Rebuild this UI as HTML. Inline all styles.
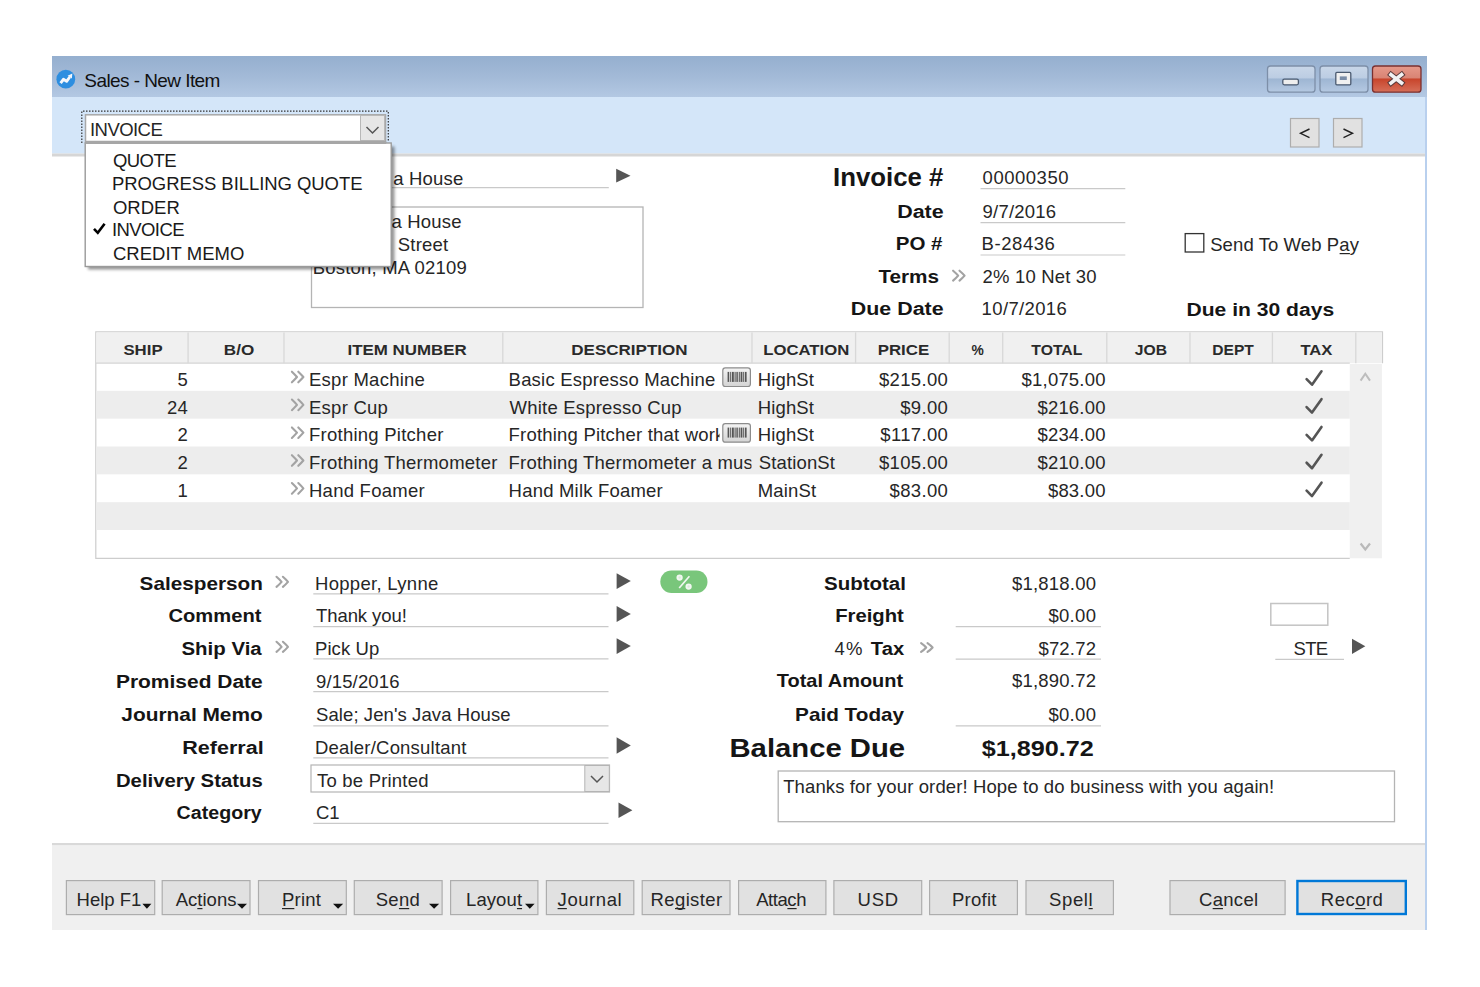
<!DOCTYPE html>
<html><head><meta charset="utf-8"><title>Sales - New Item</title>
<style>
html,body{margin:0;padding:0;background:#ffffff;width:1480px;height:987px;overflow:hidden;}
svg{display:block;font-family:"Liberation Sans", sans-serif;}
text{white-space:pre;}
</style></head><body>
<svg width="1480" height="987" viewBox="0 0 1480 987">
<defs>
<linearGradient id="gTitle" x1="0" y1="0" x2="0" y2="1"><stop offset="0" stop-color="#95afcf"/><stop offset="0.55" stop-color="#a4bbd8"/><stop offset="1" stop-color="#b3c8e3"/></linearGradient>
<linearGradient id="gBtn" x1="0" y1="0" x2="0" y2="1"><stop offset="0" stop-color="#c9d7e9"/><stop offset="0.45" stop-color="#bccde3"/><stop offset="0.5" stop-color="#9eb6d3"/><stop offset="1" stop-color="#b5c9e2"/></linearGradient>
<linearGradient id="gClose" x1="0" y1="0" x2="0" y2="1"><stop offset="0" stop-color="#e6998a"/><stop offset="0.45" stop-color="#d98474"/><stop offset="0.5" stop-color="#c8452c"/><stop offset="1" stop-color="#d6705a"/></linearGradient>
<linearGradient id="gBar" x1="0" y1="0" x2="0" y2="1"><stop offset="0" stop-color="#f4f4f4"/><stop offset="1" stop-color="#d4d4d4"/></linearGradient>
<clipPath id="clipIcon"><rect x="500" y="300" width="219.5" height="300"/></clipPath>
<clipPath id="clipDesc"><rect x="500" y="300" width="251.5" height="300"/></clipPath>
<filter id="blur" x="-10%" y="-10%" width="120%" height="120%"><feGaussianBlur stdDeviation="1.4"/></filter>
</defs>
<rect x="0" y="0" width="1480" height="987" fill="#ffffff"/>
<rect x="52" y="56" width="1375" height="41" fill="url(#gTitle)"/>
<rect x="52" y="97" width="1373" height="56.5" fill="#d4e6f9"/>
<rect x="52" y="153.5" width="1373" height="3" fill="#d6d6d6"/>
<rect x="1425" y="97" width="2" height="833" fill="#b9d0ee"/>
<rect x="52" y="843" width="1373" height="2.5" fill="#d9d9d9"/>
<rect x="52" y="845.5" width="1373" height="84.5" fill="#f0f0f0"/>
<circle cx="65.8" cy="79.2" r="9.4" fill="#2d8ee0"/>
<path d="M60.6 83.2 L63.4 79.3 L66.6 81.3 L69.8 77" fill="none" stroke="#f4f7fb" stroke-width="2.9" stroke-linejoin="round"/>
<path d="M67.6 75.8 L72.4 73.4 L71.8 78.6 Z" fill="#f4f7fb"/>
<rect x="1267.5" y="66" width="47.5" height="26.200000000000003" rx="3" fill="url(#gBtn)" stroke="#7d8fa8" stroke-width="1.3"/>
<rect x="1320" y="66" width="48" height="26.200000000000003" rx="3" fill="url(#gBtn)" stroke="#7d8fa8" stroke-width="1.3"/>
<rect x="1372.5" y="66" width="48.5" height="26.200000000000003" rx="3" fill="url(#gClose)" stroke="#7a3030" stroke-width="1.3"/>
<rect x="1282.8" y="79.2" width="15.6" height="5.6" rx="1.5" fill="#eeeeee" stroke="#4a5a70" stroke-width="1.3"/>
<rect x="1335.8" y="72.4" width="15" height="12.4" rx="1" fill="#f0f0f0" stroke="#4a5a70" stroke-width="1.3"/>
<rect x="1339.8" y="76.4" width="7" height="3.6" fill="#7a8da8"/>
<path d="M1391 74.6 L1401.6 83 M1401.6 74.6 L1391 83" stroke="#5a3a3a" stroke-width="5.6" stroke-linecap="square"/>
<path d="M1391 74.6 L1401.6 83 M1401.6 74.6 L1391 83" stroke="#f2f2f2" stroke-width="3.6" stroke-linecap="square"/>
<rect x="1290.5" y="118.5" width="28.5" height="28.5" fill="#e1e1e1" stroke="#adadad" stroke-width="1.2"/>
<rect x="1333.5" y="118.5" width="28.5" height="28.5" fill="#e1e1e1" stroke="#adadad" stroke-width="1.2"/>
<path d="M1309.5 129 L1300.5 133.3 L1309.5 137.6" fill="none" stroke="#222" stroke-width="1.4"/>
<path d="M1343.5 129 L1352.5 133.3 L1343.5 137.6" fill="none" stroke="#222" stroke-width="1.4"/>
<rect x="85.5" y="114.8" width="300" height="28" fill="#ffffff" stroke="#a8a8a8" stroke-width="1.5"/>
<rect x="360.5" y="115.5" width="24" height="25" fill="#e6e6e6" stroke="#b8b8b8" stroke-width="1"/>
<path d="M366.5 127 L372.5 133 L378.5 127" fill="none" stroke="#555" stroke-width="1.5"/>
<path d="M81.8 143 L81.8 111.2 L388.3 111.2 L388.3 141.5" fill="none" stroke="#333" stroke-width="1.2" stroke-dasharray="1.5 1.5"/>
<line x1="313" y1="187.7" x2="608.8" y2="187.7" stroke="#c9c9c9" stroke-width="1.2"/>
<rect x="311.5" y="207" width="331.5" height="100.5" fill="none" stroke="#b4b4b4" stroke-width="1.3"/>
<path d="M616.2 168.8 L630.5 175.65 L616.2 182.5 Z" fill="#555555"/>
<path d="M953.10 270.70 Q956.30 273.45 958.20 275.65 Q956.30 277.85 953.10 280.60 M959.50 270.70 Q962.70 273.45 964.60 275.65 Q962.70 277.85 959.50 280.60" fill="none" stroke="#a3a3a3" stroke-width="2.1" stroke-linecap="round" stroke-linejoin="round"/>
<line x1="980.5" y1="188.6" x2="1125.3" y2="188.6" stroke="#c9c9c9" stroke-width="1.2"/>
<line x1="980.5" y1="222.6" x2="1125.3" y2="222.6" stroke="#c9c9c9" stroke-width="1.2"/>
<line x1="980.5" y1="255" x2="1125.3" y2="255" stroke="#c9c9c9" stroke-width="1.2"/>
<rect x="1185.2" y="233.6" width="18.6" height="18.4" fill="#fff" stroke="#333" stroke-width="1.3"/>
<path d="M1382.5 363.2 L1382.5 331.8 L95.8 331.8 L95.8 558.3 L1349.8 558.3" fill="none" stroke="#cdcdcd" stroke-width="1.2"/>
<rect x="96.4" y="332.4" width="1285.5" height="30.6" fill="#f0f0f0"/>
<line x1="96" y1="363.2" x2="1349.8" y2="363.2" stroke="#d4d4d4" stroke-width="1.2"/>
<line x1="188.1" y1="332.4" x2="188.1" y2="363.2" stroke="#d8d8d8" stroke-width="1.3"/>
<line x1="284" y1="332.4" x2="284" y2="363.2" stroke="#d8d8d8" stroke-width="1.3"/>
<line x1="502.8" y1="332.4" x2="502.8" y2="363.2" stroke="#d8d8d8" stroke-width="1.3"/>
<line x1="752" y1="332.4" x2="752" y2="363.2" stroke="#d8d8d8" stroke-width="1.3"/>
<line x1="855.6" y1="332.4" x2="855.6" y2="363.2" stroke="#d8d8d8" stroke-width="1.3"/>
<line x1="949.2" y1="332.4" x2="949.2" y2="363.2" stroke="#d8d8d8" stroke-width="1.3"/>
<line x1="1002.7" y1="332.4" x2="1002.7" y2="363.2" stroke="#d8d8d8" stroke-width="1.3"/>
<line x1="1106.8" y1="332.4" x2="1106.8" y2="363.2" stroke="#d8d8d8" stroke-width="1.3"/>
<line x1="1190" y1="332.4" x2="1190" y2="363.2" stroke="#d8d8d8" stroke-width="1.3"/>
<line x1="1272.4" y1="332.4" x2="1272.4" y2="363.2" stroke="#d8d8d8" stroke-width="1.3"/>
<line x1="1355.8" y1="332.4" x2="1355.8" y2="363.2" stroke="#d8d8d8" stroke-width="1.3"/>
<rect x="96.4" y="390.84" width="1253.3999999999999" height="27.84" fill="#ededed"/>
<rect x="96.4" y="446.52" width="1253.3999999999999" height="27.84" fill="#ededed"/>
<rect x="96.4" y="502.2" width="1253.3999999999999" height="27.84" fill="#ededed"/>
<rect x="1349.8" y="363.8" width="32.100000000000136" height="194.49999999999994" fill="#f0f0f0"/>
<path d="M1360.6 380.6 L1365.3 373.8 L1370 380.6" fill="none" stroke="#bdbdbd" stroke-width="2"/>
<path d="M1360.6 543.5 L1365.3 549.5 L1370 543.5" fill="none" stroke="#b9b9b9" stroke-width="2.2"/>
<path d="M291.90 371.70 Q295.10 374.80 297.00 377.00 Q295.10 379.20 291.90 382.30 M298.30 371.70 Q301.50 374.80 303.40 377.00 Q301.50 379.20 298.30 382.30" fill="none" stroke="#a3a3a3" stroke-width="2.1" stroke-linecap="round" stroke-linejoin="round"/>
<rect x="722.8" y="367.9" width="27.6" height="18.6" rx="2.5" fill="url(#gBar)" stroke="#8c8c8c" stroke-width="1.2"/>
<rect x="727.6" y="371.9" width="1.6" height="10" fill="#555"/>
<rect x="730.2" y="371.9" width="1.0" height="10" fill="#555"/>
<rect x="732.0" y="371.9" width="1.8" height="10" fill="#555"/>
<rect x="734.6" y="371.9" width="1.0" height="10" fill="#555"/>
<rect x="736.4" y="371.9" width="1.4" height="10" fill="#555"/>
<rect x="738.8" y="371.9" width="1.0" height="10" fill="#555"/>
<rect x="740.6" y="371.9" width="1.8" height="10" fill="#555"/>
<rect x="743.2" y="371.9" width="1.0" height="10" fill="#555"/>
<rect x="745.0" y="371.9" width="1.6" height="10" fill="#555"/>
<path d="M1306.6 379.2 L1312 384.7 L1321.5 371.3" fill="none" stroke="#555555" stroke-width="2.6" stroke-linecap="round" stroke-linejoin="round"/>
<path d="M291.90 399.54 Q295.10 402.64 297.00 404.84 Q295.10 407.04 291.90 410.14 M298.30 399.54 Q301.50 402.64 303.40 404.84 Q301.50 407.04 298.30 410.14" fill="none" stroke="#a3a3a3" stroke-width="2.1" stroke-linecap="round" stroke-linejoin="round"/>
<path d="M1306.6 407.03999999999996 L1312 412.53999999999996 L1321.5 399.14" fill="none" stroke="#555555" stroke-width="2.6" stroke-linecap="round" stroke-linejoin="round"/>
<path d="M291.90 427.38 Q295.10 430.48 297.00 432.68 Q295.10 434.88 291.90 437.98 M298.30 427.38 Q301.50 430.48 303.40 432.68 Q301.50 434.88 298.30 437.98" fill="none" stroke="#a3a3a3" stroke-width="2.1" stroke-linecap="round" stroke-linejoin="round"/>
<rect x="722.8" y="423.58" width="27.6" height="18.6" rx="2.5" fill="url(#gBar)" stroke="#8c8c8c" stroke-width="1.2"/>
<rect x="727.6" y="427.58" width="1.6" height="10" fill="#555"/>
<rect x="730.2" y="427.58" width="1.0" height="10" fill="#555"/>
<rect x="732.0" y="427.58" width="1.8" height="10" fill="#555"/>
<rect x="734.6" y="427.58" width="1.0" height="10" fill="#555"/>
<rect x="736.4" y="427.58" width="1.4" height="10" fill="#555"/>
<rect x="738.8" y="427.58" width="1.0" height="10" fill="#555"/>
<rect x="740.6" y="427.58" width="1.8" height="10" fill="#555"/>
<rect x="743.2" y="427.58" width="1.0" height="10" fill="#555"/>
<rect x="745.0" y="427.58" width="1.6" height="10" fill="#555"/>
<path d="M1306.6 434.88 L1312 440.38 L1321.5 426.98" fill="none" stroke="#555555" stroke-width="2.6" stroke-linecap="round" stroke-linejoin="round"/>
<path d="M291.90 455.22 Q295.10 458.32 297.00 460.52 Q295.10 462.72 291.90 465.82 M298.30 455.22 Q301.50 458.32 303.40 460.52 Q301.50 462.72 298.30 465.82" fill="none" stroke="#a3a3a3" stroke-width="2.1" stroke-linecap="round" stroke-linejoin="round"/>
<path d="M1306.6 462.71999999999997 L1312 468.21999999999997 L1321.5 454.82" fill="none" stroke="#555555" stroke-width="2.6" stroke-linecap="round" stroke-linejoin="round"/>
<path d="M291.90 483.06 Q295.10 486.16 297.00 488.36 Q295.10 490.56 291.90 493.66 M298.30 483.06 Q301.50 486.16 303.40 488.36 Q301.50 490.56 298.30 493.66" fill="none" stroke="#a3a3a3" stroke-width="2.1" stroke-linecap="round" stroke-linejoin="round"/>
<path d="M1306.6 490.56 L1312 496.06 L1321.5 482.66" fill="none" stroke="#555555" stroke-width="2.6" stroke-linecap="round" stroke-linejoin="round"/>
<path d="M276.50 576.80 Q279.70 579.65 281.60 581.85 Q279.70 584.05 276.50 586.90 M282.90 576.80 Q286.10 579.65 288.00 581.85 Q286.10 584.05 282.90 586.90" fill="none" stroke="#a3a3a3" stroke-width="2.1" stroke-linecap="round" stroke-linejoin="round"/>
<path d="M276.50 641.80 Q279.70 644.65 281.60 646.85 Q279.70 649.05 276.50 651.90 M282.90 641.80 Q286.10 644.65 288.00 646.85 Q286.10 649.05 282.90 651.90" fill="none" stroke="#a3a3a3" stroke-width="2.1" stroke-linecap="round" stroke-linejoin="round"/>
<line x1="313.3" y1="593.8" x2="608.5" y2="593.8" stroke="#c9c9c9" stroke-width="1.2"/>
<line x1="313.3" y1="626.6" x2="608.5" y2="626.6" stroke="#c9c9c9" stroke-width="1.2"/>
<line x1="313.3" y1="658.9" x2="608.5" y2="658.9" stroke="#c9c9c9" stroke-width="1.2"/>
<line x1="313.3" y1="691.7" x2="608.5" y2="691.7" stroke="#c9c9c9" stroke-width="1.2"/>
<line x1="313.3" y1="725.9" x2="608.5" y2="725.9" stroke="#c9c9c9" stroke-width="1.2"/>
<line x1="313.3" y1="757.9" x2="608.5" y2="757.9" stroke="#c9c9c9" stroke-width="1.2"/>
<line x1="313.3" y1="823.4" x2="608.5" y2="823.4" stroke="#c9c9c9" stroke-width="1.2"/>
<rect x="311" y="765" width="298.5" height="27" fill="#fff" stroke="#b4b4b4" stroke-width="1.2"/>
<rect x="584.8" y="765.5" width="24.5" height="26" fill="#e6e6e6" stroke="#b4b4b4" stroke-width="1"/>
<path d="M591 776 L597 782 L603 776" fill="none" stroke="#555" stroke-width="1.5"/>
<path d="M616.6 573.2 L630.8 581.1 L616.6 589 Z" fill="#555555"/>
<path d="M616.6 606 L630.8 614.0 L616.6 622 Z" fill="#555555"/>
<path d="M616.6 638.3 L630.8 646.0999999999999 L616.6 653.9 Z" fill="#555555"/>
<path d="M616.6 737.3 L630.8 745.5 L616.6 753.7 Z" fill="#555555"/>
<path d="M618.5 802.4 L632.4 810.2 L618.5 818 Z" fill="#555555"/>
<rect x="660.3" y="570.6" width="47.2" height="22.3" rx="11.15" fill="#79c67b"/>
<circle cx="679.6" cy="577.6" r="2.2" fill="#d8eed8" stroke="#f2f7f2" stroke-width="1.9"/>
<circle cx="688.6" cy="586.6" r="2.2" fill="#d8eed8" stroke="#f2f7f2" stroke-width="1.9"/>
<line x1="679.2" y1="588" x2="689.4" y2="576.2" stroke="#f2f7f2" stroke-width="1.7"/>
<path d="M921.10 643.10 Q924.30 645.30 926.20 647.50 Q924.30 649.70 921.10 651.90 M927.50 643.10 Q930.70 645.30 932.60 647.50 Q930.70 649.70 927.50 651.90" fill="none" stroke="#a3a3a3" stroke-width="2.1" stroke-linecap="round" stroke-linejoin="round"/>
<line x1="955.7" y1="626.7" x2="1101" y2="626.7" stroke="#c9c9c9" stroke-width="1.2"/>
<line x1="955.7" y1="659.1" x2="1101" y2="659.1" stroke="#c9c9c9" stroke-width="1.2"/>
<line x1="955.7" y1="725.9" x2="1101" y2="725.9" stroke="#c9c9c9" stroke-width="1.2"/>
<rect x="1270.8" y="603.5" width="57" height="21.7" fill="#fff" stroke="#c4c4c4" stroke-width="1.5"/>
<line x1="1275.3" y1="659.4" x2="1344" y2="659.4" stroke="#c9c9c9" stroke-width="1.2"/>
<path d="M1352 638.7 L1365.3 646.3 L1352 653.9 Z" fill="#555555"/>
<rect x="778.2" y="771" width="616.3" height="50.7" fill="#fff" stroke="#b4b4b4" stroke-width="1.3"/>
<rect x="66.39999999999999" y="880.6" width="88.30000000000001" height="34" fill="#e1e1e1" stroke="#adadad" stroke-width="1.2"/>
<path d="M142.4 903.8 L151.4 903.8 L146.9 908.8 Z" fill="#111"/>
<rect x="162.2" y="880.6" width="87.8" height="34" fill="#e1e1e1" stroke="#adadad" stroke-width="1.2"/>
<path d="M237 903.8 L247 903.8 L242.0 908.8 Z" fill="#111"/>
<rect x="258.5" y="880.6" width="87.8" height="34" fill="#e1e1e1" stroke="#adadad" stroke-width="1.2"/>
<path d="M333 903.8 L343.2 903.8 L338.1 908.8 Z" fill="#111"/>
<rect x="354.3" y="880.6" width="87.8" height="34" fill="#e1e1e1" stroke="#adadad" stroke-width="1.2"/>
<path d="M429 903.8 L439.2 903.8 L434.1 908.8 Z" fill="#111"/>
<rect x="450.6" y="880.6" width="87.3" height="34" fill="#e1e1e1" stroke="#adadad" stroke-width="1.2"/>
<path d="M525 903.8 L534.6 903.8 L529.8 908.8 Z" fill="#111"/>
<rect x="546.4" y="880.6" width="87.40000000000002" height="34" fill="#e1e1e1" stroke="#adadad" stroke-width="1.2"/>
<rect x="642.2" y="880.6" width="87.8" height="34" fill="#e1e1e1" stroke="#adadad" stroke-width="1.2"/>
<rect x="738.6" y="880.6" width="87.3" height="34" fill="#e1e1e1" stroke="#adadad" stroke-width="1.2"/>
<rect x="833.9" y="880.6" width="87.8" height="34" fill="#e1e1e1" stroke="#adadad" stroke-width="1.2"/>
<rect x="929.6" y="880.6" width="87.8" height="34" fill="#e1e1e1" stroke="#adadad" stroke-width="1.2"/>
<rect x="1026.0" y="880.6" width="87.3999999999999" height="34" fill="#e1e1e1" stroke="#adadad" stroke-width="1.2"/>
<rect x="1170.0" y="880.6" width="115.09999999999995" height="34" fill="#e1e1e1" stroke="#adadad" stroke-width="1.2"/>
<rect x="1297.4" y="881" width="108.39999999999986" height="33" fill="#e1e1e1" stroke="#0078d7" stroke-width="2.4"/>
<text x="84.30" y="87.2" font-size="19" font-weight="400" letter-spacing="-0.568" fill="#111">Sales - New Item</text>
<text x="90.00" y="136.2" font-size="18.5" font-weight="400" letter-spacing="-0.555" fill="#262626">INVOICE</text>
<text x="393.18" y="185" font-size="18.5" font-weight="400" letter-spacing="0.200" fill="#262626">a House</text>
<text x="391.48" y="227.5" font-size="18.5" font-weight="400" letter-spacing="0.200" fill="#262626">a House</text>
<text x="314.74" y="250.5" font-size="18.5" font-weight="400" letter-spacing="0.200" fill="#262626">102 Main Street</text>
<text x="312.75" y="273.75" font-size="18.5" font-weight="400" letter-spacing="0.189" fill="#262626">Boston, MA 02109</text>
<text transform="translate(832.99 186.4) scale(1.0116 1)" x="0" y="0" font-size="25.5" font-weight="700" fill="#151515">Invoice #</text>
<text transform="translate(897.17 218.4) scale(1.1284 1)" x="0" y="0" font-size="19" font-weight="700" fill="#151515">Date</text>
<text transform="translate(895.72 250.1) scale(1.0812 1)" x="0" y="0" font-size="19" font-weight="700" fill="#151515">PO #</text>
<text transform="translate(878.40 283.2) scale(1.0917 1)" x="0" y="0" font-size="19" font-weight="700" fill="#151515">Terms</text>
<text transform="translate(850.87 315.4) scale(1.1264 1)" x="0" y="0" font-size="19" font-weight="700" fill="#151515">Due Date</text>
<text x="982.60" y="183.8" font-size="18.5" font-weight="400" letter-spacing="0.511" fill="#262626">00000350</text>
<text x="982.60" y="217.7" font-size="18.5" font-weight="400" letter-spacing="0.197" fill="#262626">9/7/2016</text>
<text x="981.60" y="250" font-size="18.5" font-weight="400" letter-spacing="0.557" fill="#262626">B-28436</text>
<text x="982.60" y="282.6" font-size="18.5" font-weight="400" letter-spacing="0.172" fill="#262626">2% 10 Net 30</text>
<text x="981.60" y="315" font-size="18.5" font-weight="400" letter-spacing="0.361" fill="#262626">10/7/2016</text>
<text x="1210.20" y="251" font-size="18.5" font-weight="400" letter-spacing="0.093" fill="#262626">Send To Web Pay</text><line x1="1339.62" y1="253.6" x2="1349.91" y2="253.6" stroke="#262626" stroke-width="1.2"/>
<text transform="translate(1186.49 315.6) scale(1.1104 1)" x="0" y="0" font-size="19" font-weight="700" fill="#151515">Due in 30 days</text>
<text transform="translate(123.40 355.1) scale(1.1589 1)" x="0" y="0" font-size="14.5" font-weight="700" fill="#2a2a2a">SHIP</text>
<text transform="translate(223.80 355.1) scale(1.1804 1)" x="0" y="0" font-size="14.5" font-weight="700" fill="#2a2a2a">B/O</text>
<text transform="translate(347.50 355.1) scale(1.1670 1)" x="0" y="0" font-size="14.5" font-weight="700" fill="#2a2a2a">ITEM NUMBER</text>
<text transform="translate(571.30 355.1) scale(1.1742 1)" x="0" y="0" font-size="14.5" font-weight="700" fill="#2a2a2a">DESCRIPTION</text>
<text transform="translate(763.30 355.1) scale(1.1528 1)" x="0" y="0" font-size="14.5" font-weight="700" fill="#2a2a2a">LOCATION</text>
<text transform="translate(877.70 355.1) scale(1.1626 1)" x="0" y="0" font-size="14.5" font-weight="700" fill="#2a2a2a">PRICE</text>
<text transform="translate(971.60 355.1) scale(0.9538 1)" x="0" y="0" font-size="14.5" font-weight="700" fill="#2a2a2a">%</text>
<text transform="translate(1031.30 355.1) scale(1.0886 1)" x="0" y="0" font-size="14.5" font-weight="700" fill="#2a2a2a">TOTAL</text>
<text transform="translate(1134.80 355.1) scale(1.0803 1)" x="0" y="0" font-size="14.5" font-weight="700" fill="#2a2a2a">JOB</text>
<text transform="translate(1212.30 355.1) scale(1.0743 1)" x="0" y="0" font-size="14.5" font-weight="700" fill="#2a2a2a">DEPT</text>
<text transform="translate(1300.40 355.1) scale(1.1433 1)" x="0" y="0" font-size="14.5" font-weight="700" fill="#2a2a2a">TAX</text>
<text x="177.40" y="385.8" font-size="18.5" font-weight="400" letter-spacing="0.200" fill="#262626">5</text>
<text x="309.00" y="385.8" font-size="18.5" font-weight="400" letter-spacing="0.250" fill="#262626">Espr Machine</text>
<text x="508.60" y="385.8" font-size="18.5" font-weight="400" letter-spacing="0.200" fill="#262626" clip-path="url(#clipIcon)">Basic Espresso Machine</text>
<text x="757.70" y="385.8" font-size="18.5" font-weight="400" letter-spacing="0.150" fill="#262626">HighSt</text>
<text x="878.92" y="385.8" font-size="18.5" font-weight="400" letter-spacing="0.350" fill="#262626">$215.00</text>
<text x="1021.59" y="385.8" font-size="18.5" font-weight="400" letter-spacing="0.200" fill="#262626">$1,075.00</text>
<text x="166.91" y="413.55" font-size="18.5" font-weight="400" letter-spacing="0.200" fill="#262626">24</text>
<text x="309.00" y="413.55" font-size="18.5" font-weight="400" letter-spacing="0.250" fill="#262626">Espr Cup</text>
<text x="509.60" y="413.55" font-size="18.5" font-weight="400" letter-spacing="0.200" fill="#262626" clip-path="url(#clipDesc)">White Espresso Cup</text>
<text x="757.70" y="413.55" font-size="18.5" font-weight="400" letter-spacing="0.150" fill="#262626">HighSt</text>
<text x="900.19" y="413.55" font-size="18.5" font-weight="400" letter-spacing="0.350" fill="#262626">$9.00</text>
<text x="1037.42" y="413.55" font-size="18.5" font-weight="400" letter-spacing="0.200" fill="#262626">$216.00</text>
<text x="177.40" y="441.3" font-size="18.5" font-weight="400" letter-spacing="0.200" fill="#262626">2</text>
<text x="309.00" y="441.3" font-size="18.5" font-weight="400" letter-spacing="0.250" fill="#262626">Frothing Pitcher</text>
<text x="508.60" y="441.3" font-size="18.5" font-weight="400" letter-spacing="0.200" fill="#262626" clip-path="url(#clipIcon)">Frothing Pitcher that works well</text>
<text x="757.70" y="441.3" font-size="18.5" font-weight="400" letter-spacing="0.150" fill="#262626">HighSt</text>
<text x="880.29" y="441.3" font-size="18.5" font-weight="400" letter-spacing="0.350" fill="#262626">$117.00</text>
<text x="1037.42" y="441.3" font-size="18.5" font-weight="400" letter-spacing="0.200" fill="#262626">$234.00</text>
<text x="177.40" y="469.05" font-size="18.5" font-weight="400" letter-spacing="0.200" fill="#262626">2</text>
<text x="309.00" y="469.05" font-size="18.5" font-weight="400" letter-spacing="0.250" fill="#262626">Frothing Thermometer</text>
<text x="508.60" y="469.05" font-size="18.5" font-weight="400" letter-spacing="0.200" fill="#262626" clip-path="url(#clipDesc)">Frothing Thermometer a must have</text>
<text x="758.70" y="469.05" font-size="18.5" font-weight="400" letter-spacing="0.150" fill="#262626">StationSt</text>
<text x="878.92" y="469.05" font-size="18.5" font-weight="400" letter-spacing="0.350" fill="#262626">$105.00</text>
<text x="1037.42" y="469.05" font-size="18.5" font-weight="400" letter-spacing="0.200" fill="#262626">$210.00</text>
<text x="177.40" y="496.8" font-size="18.5" font-weight="400" letter-spacing="0.200" fill="#262626">1</text>
<text x="309.00" y="496.8" font-size="18.5" font-weight="400" letter-spacing="0.250" fill="#262626">Hand Foamer</text>
<text x="508.60" y="496.8" font-size="18.5" font-weight="400" letter-spacing="0.200" fill="#262626" clip-path="url(#clipDesc)">Hand Milk Foamer</text>
<text x="757.70" y="496.8" font-size="18.5" font-weight="400" letter-spacing="0.150" fill="#262626">MainSt</text>
<text x="889.55" y="496.8" font-size="18.5" font-weight="400" letter-spacing="0.350" fill="#262626">$83.00</text>
<text x="1047.90" y="496.8" font-size="18.5" font-weight="400" letter-spacing="0.200" fill="#262626">$83.00</text>
<text transform="translate(139.60 590.2) scale(1.0908 1)" x="0" y="0" font-size="19" font-weight="700" fill="#151515">Salesperson</text>
<text transform="translate(168.40 622.4) scale(1.0624 1)" x="0" y="0" font-size="19" font-weight="700" fill="#151515">Comment</text>
<text transform="translate(181.50 655.2) scale(1.0753 1)" x="0" y="0" font-size="19" font-weight="700" fill="#151515">Ship Via</text>
<text transform="translate(115.90 687.5) scale(1.1044 1)" x="0" y="0" font-size="19" font-weight="700" fill="#151515">Promised Date</text>
<text transform="translate(121.30 721.4) scale(1.0991 1)" x="0" y="0" font-size="19" font-weight="700" fill="#151515">Journal Memo</text>
<text transform="translate(182.27 753.7) scale(1.1332 1)" x="0" y="0" font-size="19" font-weight="700" fill="#151515">Referral</text>
<text transform="translate(115.93 786.5) scale(1.0699 1)" x="0" y="0" font-size="19" font-weight="700" fill="#151515">Delivery Status</text>
<text transform="translate(176.60 818.8) scale(1.0340 1)" x="0" y="0" font-size="19" font-weight="700" fill="#151515">Category</text>
<text x="315.00" y="590.3" font-size="18.5" font-weight="400" letter-spacing="0.303" fill="#262626">Hopper, Lynne</text>
<text x="316.00" y="622.4" font-size="18.5" font-weight="400" letter-spacing="-0.076" fill="#262626">Thank you!</text>
<text x="315.00" y="655.2" font-size="18.5" font-weight="400" letter-spacing="0.075" fill="#262626">Pick Up</text>
<text x="316.00" y="687.5" font-size="18.5" font-weight="400" letter-spacing="0.148" fill="#262626">9/15/2016</text>
<text x="316.00" y="721.4" font-size="18.5" font-weight="400" letter-spacing="0.088" fill="#262626">Sale; Jen&#x27;s Java House</text>
<text x="315.00" y="753.7" font-size="18.5" font-weight="400" letter-spacing="0.204" fill="#262626">Dealer/Consultant</text>
<text x="317.00" y="786.5" font-size="18.5" font-weight="400" letter-spacing="0.206" fill="#262626">To be Printed</text>
<text x="316.00" y="818.8" font-size="18.5" font-weight="400" letter-spacing="0.000" fill="#262626">C1</text>
<text transform="translate(824.00 590.1) scale(1.0788 1)" x="0" y="0" font-size="19" font-weight="700" fill="#151515">Subtotal</text>
<text transform="translate(835.13 622.3) scale(1.0678 1)" x="0" y="0" font-size="19" font-weight="700" fill="#151515">Freight</text>
<text transform="translate(776.80 687.4) scale(1.0502 1)" x="0" y="0" font-size="19" font-weight="700" fill="#151515">Total Amount</text>
<text transform="translate(795.11 721) scale(1.0908 1)" x="0" y="0" font-size="19" font-weight="700" fill="#151515">Paid Today</text>
<text x="834.60" y="654.7" font-size="18.5" font-weight="400" letter-spacing="1.011" fill="#262626">4%</text>
<text transform="translate(870.80 654.7) scale(1.0641 1)" x="0" y="0" font-size="19" font-weight="700" fill="#151515">Tax</text>
<text transform="translate(729.47 756.8) scale(1.1261 1)" x="0" y="0" font-size="26" font-weight="700" fill="#151515">Balance Due</text>
<text x="1011.90" y="590.1" font-size="18.5" font-weight="400" letter-spacing="0.223" fill="#262626">$1,818.00</text>
<text x="1048.40" y="622.3" font-size="18.5" font-weight="400" letter-spacing="0.323" fill="#262626">$0.00</text>
<text x="1038.40" y="654.7" font-size="18.5" font-weight="400" letter-spacing="0.201" fill="#262626">$72.72</text>
<text x="1011.90" y="687.4" font-size="18.5" font-weight="400" letter-spacing="0.223" fill="#262626">$1,890.72</text>
<text x="1048.40" y="721" font-size="18.5" font-weight="400" letter-spacing="0.323" fill="#262626">$0.00</text>
<text transform="translate(981.70 755.7) scale(1.1217 1)" x="0" y="0" font-size="22.5" font-weight="700" fill="#151515">$1,890.72</text>
<text x="1293.50" y="655.4" font-size="18.5" font-weight="400" letter-spacing="-0.670" fill="#262626">STE</text>
<text x="783.20" y="792.9" font-size="18.5" font-weight="400" letter-spacing="0.116" fill="#262626">Thanks for your order! Hope to do business with you again!</text>
<text x="76.60" y="906" font-size="18.5" font-weight="400" letter-spacing="-0.015" fill="#262626">Help F1</text>
<text x="175.70" y="906" font-size="18.5" font-weight="400" letter-spacing="0.014" fill="#262626">Actions</text><line x1="197.32" y1="908.6" x2="202.46" y2="908.6" stroke="#262626" stroke-width="1.2"/>
<text x="282.00" y="906" font-size="18.5" font-weight="400" letter-spacing="0.225" fill="#262626">Print</text><line x1="282.00" y1="908.6" x2="294.34" y2="908.6" stroke="#262626" stroke-width="1.2"/>
<text x="375.70" y="906" font-size="18.5" font-weight="400" letter-spacing="0.294" fill="#262626">Send</text><line x1="398.92" y1="908.6" x2="409.21" y2="908.6" stroke="#262626" stroke-width="1.2"/>
<text x="466.00" y="906" font-size="18.5" font-weight="400" letter-spacing="0.099" fill="#262626">Layout</text><line x1="516.90" y1="908.6" x2="522.04" y2="908.6" stroke="#262626" stroke-width="1.2"/>
<text x="557.60" y="906" font-size="18.5" font-weight="400" letter-spacing="0.556" fill="#262626">Journal</text><line x1="557.60" y1="908.6" x2="566.85" y2="908.6" stroke="#262626" stroke-width="1.2"/>
<text x="650.60" y="906" font-size="18.5" font-weight="400" letter-spacing="0.368" fill="#262626">Register</text><line x1="674.98" y1="908.6" x2="685.27" y2="908.6" stroke="#262626" stroke-width="1.2"/>
<text x="756.20" y="906" font-size="18.5" font-weight="400" letter-spacing="-0.432" fill="#262626">Attach</text><line x1="787.38" y1="908.6" x2="796.63" y2="908.6" stroke="#262626" stroke-width="1.2"/>
<text x="857.50" y="906" font-size="18.5" font-weight="400" letter-spacing="0.800" fill="#262626">USD</text>
<text x="952.00" y="906" font-size="18.5" font-weight="400" letter-spacing="0.252" fill="#262626">Profit</text>
<text x="1049.00" y="906" font-size="18.5" font-weight="400" letter-spacing="0.643" fill="#262626">Spell</text><line x1="1088.60" y1="908.6" x2="1092.71" y2="908.6" stroke="#262626" stroke-width="1.2"/>
<text x="1199.00" y="906" font-size="18.5" font-weight="400" letter-spacing="0.305" fill="#262626">Cancel</text><line x1="1212.66" y1="908.6" x2="1222.95" y2="908.6" stroke="#262626" stroke-width="1.2"/>
<text x="1320.80" y="906" font-size="18.5" font-weight="400" letter-spacing="0.490" fill="#262626">Record</text><line x1="1355.17" y1="908.6" x2="1365.46" y2="908.6" stroke="#262626" stroke-width="1.2"/>
<rect x="88" y="146.5" width="306.5" height="123" fill="#000" opacity="0.42" filter="url(#blur)"/>
<rect x="85.2" y="143" width="306" height="123.5" fill="#ffffff" stroke="#9a9a9a" stroke-width="1.4"/>
<line x1="85.5" y1="142.3" x2="386.2" y2="142.3" stroke="#a6a6a6" stroke-width="3.2"/>
<path d="M94 228.8 L97.8 232.8 L104.6 223.8" fill="none" stroke="#000" stroke-width="2.6"/>
<text x="112.90" y="167" font-size="18.5" font-weight="400" letter-spacing="-0.535" fill="#1a1a1a">QUOTE</text>
<text x="111.90" y="190.2" font-size="18.5" font-weight="400" letter-spacing="-0.058" fill="#1a1a1a">PROGRESS BILLING QUOTE</text>
<text x="112.90" y="213.5" font-size="18.5" font-weight="400" letter-spacing="0.038" fill="#1a1a1a">ORDER</text>
<text x="111.90" y="236.2" font-size="18.5" font-weight="400" letter-spacing="-0.572" fill="#1a1a1a">INVOICE</text>
<text x="112.90" y="260" font-size="18.5" font-weight="400" letter-spacing="0.024" fill="#1a1a1a">CREDIT MEMO</text>
</svg>
</body></html>
